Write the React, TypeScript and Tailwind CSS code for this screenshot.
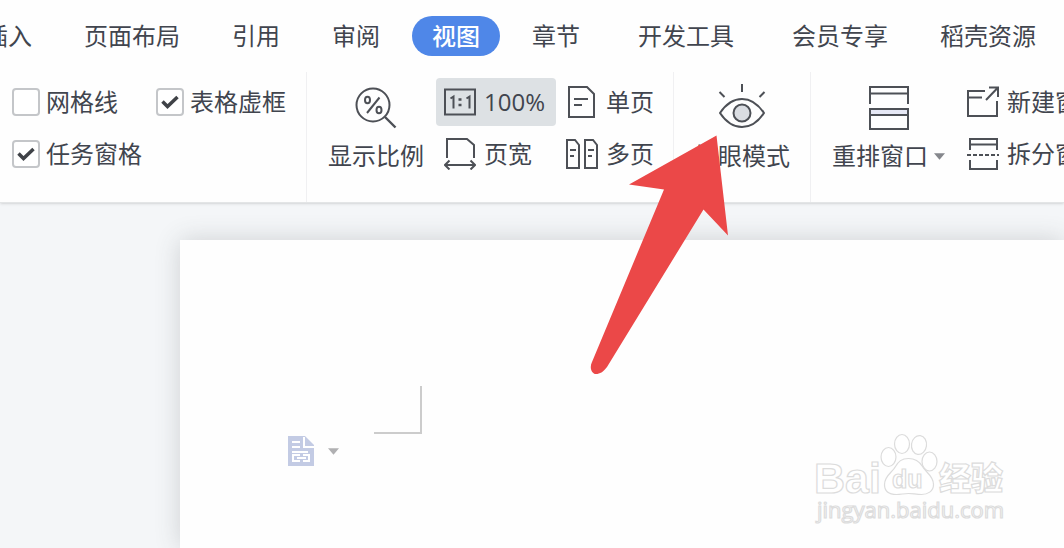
import type { ReactNode } from "react";

interface Tab {
  name: string;
  active?: boolean;
  className?: string;
}

const tabs: Tab[] = [
  { name: "插入" },
  { name: "页面布局" },
  { name: "引用" },
  { name: "审阅" },
  { name: "视图", active: true },
  { name: "章节" },
  { name: "开发工具", className: "mx-1.5" },
  { name: "会员专享" },
  { name: "稻壳资源" },
];

const ZoomIcon = () => (
  <svg width="48" height="48" viewBox="0 0 48 48" fill="none" stroke="#4d5056" strokeWidth="2">
    <circle cx="21" cy="21" r="16.500" />
    <path d="M33 33l10.500 10.500" strokeWidth="2.400" />
    <path d="M27.500 13.500L15 29" />
    <ellipse cx="15.500" cy="16" rx="2.500" ry="3.300" />
    <ellipse cx="27" cy="26" rx="2.500" ry="3.300" />
  </svg>
);

const ActualSizeIcon = () => (
  <svg width="32" height="32" viewBox="0 0 32 32" fill="none" stroke="#4d5056" strokeWidth="2">
    <rect x="1" y="3.500" width="30" height="25" />
    <path d="M6.500 12.500l3-2v12M22.500 12.500l3-2v12" />
    <path d="M14.500 13.500h3M14.500 19h3" strokeWidth="2.400" />
  </svg>
);

const PageWidthIcon = () => (
  <svg width="32" height="32" viewBox="0 0 32 32" fill="none" stroke="#4d5056" strokeWidth="2">
    <path d="M3 20V1h20l7 6v13" />
    <path d="M1 27h30M5.500 22.500L1 27l4.500 4.500M26.500 22.500L31 27l-4.500 4.500" />
  </svg>
);

const SinglePageIcon = () => (
  <svg width="32" height="32" viewBox="0 0 32 32" fill="none" stroke="#4d5056" strokeWidth="2">
    <path d="M3 1h18l7 7v23H3z" />
    <path d="M8 13h14M8 19h8" />
  </svg>
);

const MultiPageIcon = () => (
  <svg width="32" height="32" viewBox="0 0 32 32" fill="none" stroke="#4d5056" strokeWidth="2">
    <path d="M1 2h8l4 5v23H1zM19 2h8l4 5v23H19z" />
    <path d="M4 12h6M4 18h4M22 12h6M22 18h4" />
  </svg>
);

const EyeIcon = () => (
  <svg width="48" height="48" viewBox="0 0 48 48" fill="none" stroke="#4d5056" strokeWidth="2">
    <path d="M2 29C8 20 15 15 24 15s16 5 22 14c-6 9-13 14-22 14S8 38 2 29z" strokeLinejoin="round" />
    <circle cx="24" cy="29" r="8.500" fill="#dadde2" />
    <path d="M24 0v8M1.500 8l5 5M46.500 8l-5 5" />
  </svg>
);

const ArrangeIcon = () => (
  <svg width="48" height="48" viewBox="0 0 48 48" fill="none" stroke="#4d5056" strokeWidth="2">
    <path d="M5 20V3h38v17M5 9.500h38" />
    <path d="M5 25h38v6H5z" fill="#e6e8f5" />
    <path d="M5 25h38v20H5z" />
  </svg>
);

const NewWindowIcon = () => (
  <svg width="32" height="32" viewBox="0 0 32 32" fill="none" stroke="#4d5056" strokeWidth="2">
    <path d="M18 5H1v25h29V15M1 11.500h14" />
    <path d="M19 14L31 1.500M22 1.500h9V11" />
  </svg>
);

const SplitIcon = () => (
  <svg width="32" height="32" viewBox="0 0 32 32" fill="none" stroke="#4d5056" strokeWidth="2">
    <path d="M3 12V1h27v11M3 6.500h27" />
    <path d="M0 17h32" strokeDasharray="4 2" />
    <path d="M3 22v9h27v-9" />
  </svg>
);

const Caret = () => (
  <svg width="11" height="7" viewBox="0 0 12 7" fill="currentColor" className="shrink-0">
    <path d="M0 0h12L6 7z" />
  </svg>
);

const CheckOption = ({ label, checked }: { label: string; checked?: boolean }) => (
  <label className="flex h-12 items-center gap-1.5">
    <span className="grid size-7 shrink-0">
      <input
        type="checkbox"
        defaultChecked={checked}
        className="peer col-start-1 row-start-1 size-7 appearance-none rounded-sm border-2 border-[#c4c6c9] bg-white"
      />
      <svg
        viewBox="0 0 28 28"
        fill="none"
        stroke="#3f4247"
        strokeWidth="3.500"
        className="pointer-events-none invisible col-start-1 row-start-1 size-7 peer-checked:visible"
      >
        <path d="M6.500 13.500l5 5L21.500 9" />
      </svg>
    </span>
    {label}
  </label>
);

const SmallButton = ({ icon, label, pressed }: { icon: ReactNode; label: string; pressed?: boolean }) => (
  <button
    type="button"
    aria-pressed={pressed}
    className={`flex h-12 items-center gap-2 rounded-sm px-2 whitespace-nowrap ${
      pressed ? "min-w-[120px] bg-[#dde1e4]" : ""
    }`}
  >
    {icon}
    {label}
  </button>
);

const LargeButton = ({ icon, label, caret }: { icon: ReactNode; label: string; caret?: boolean }) => (
  <button type="button" className="flex flex-col items-center gap-2 pt-1.5">
    {icon}
    <span className="flex items-center gap-1.5 leading-8 whitespace-nowrap">
      {label}
      {caret && (
        <span className="text-[#85878c]">
          <Caret />
        </span>
      )}
    </span>
  </button>
);

const Group = ({ children, className = "" }: { children: ReactNode; className?: string }) => (
  <section className={`flex shrink-0 items-start border-r border-[#f0f0f2] pb-6 pt-1.5 ${className}`}>
    {children}
  </section>
);

const PointerArrow = () => (
  <svg
    width="152"
    height="248"
    viewBox="0 0 152 248"
    fill="#eb4848"
    className="pointer-events-none absolute -left-[110px] top-[54px] z-10 max-w-none"
  >
    <path d="M132.500 3.500L144 103.500 119.500 77.500 23 235C19 240 16 242 12 242C8 242 5 236 8 230L80 57.500 45 52.500z" />
  </svg>
);

const Watermark = () => (
  <svg
    width="196"
    height="96"
    viewBox="0 0 196 96"
    fill="#ffffff"
    stroke="#dcdcdc"
    strokeWidth="1.200"
    className="absolute bottom-5 right-14"
  >
    <text x="2" y="61" fontSize="43" fontWeight="700" fontFamily="'Liberation Sans', sans-serif">
      Bai
    </text>
    <ellipse cx="76.500" cy="25" rx="7.500" ry="9.500" />
    <ellipse cx="90" cy="12" rx="7.500" ry="9.500" />
    <ellipse cx="107" cy="13" rx="7.500" ry="9.500" transform="rotate(8 107 13)" />
    <ellipse cx="117.500" cy="29.500" rx="7.500" ry="9.500" />
    <path d="M96.500 26.500c7 0 11 3 14 8 3 6 11 9 11 18 0 7-6 10-12 10-5 0-9-1-13-1s-8 1-12 1c-7 0-12-3-12-10 0-9 8-12 11-18 3-5 6-8 13-8z" />
    <text x="80" y="56" fontSize="25" fontWeight="700" fontFamily="'Liberation Sans', sans-serif">
      du
    </text>
    <text x="127" y="58" fontSize="32" fontWeight="900" fontFamily="'Noto Sans CJK SC', sans-serif">
      经验
    </text>
    <text x="5" y="86" fontSize="22" fontFamily="'Open Sans', sans-serif">
      jingyan.baidu.com
    </text>
  </svg>
);

export default function App() {
  return (
    <div className="relative flex min-h-screen flex-col overflow-hidden bg-[#f4f6f8] font-['Open_Sans','Noto_Sans_CJK_SC',sans-serif] text-2xl text-[#41454e]">
      <header className="relative z-10 border-b border-[#e3e5e6] bg-[#fefefe] shadow-sm">
        <nav className="-ml-9 flex gap-3 py-4">
          {tabs.map((tab) => (
            <a
              key={tab.name}
              href="#"
              className={`flex h-10 shrink-0 items-center rounded-full px-5 whitespace-nowrap ${tab.className ?? ""} ${
                tab.active ? "bg-[#4f87e8] font-medium text-white" : ""
              }`}
            >
              {tab.name}
            </a>
          ))}
        </nav>

        <div className="flex">
          <Group className="pl-3 pr-5">
            <div className="grid grid-cols-[auto_auto] gap-x-[38px] gap-y-1">
              <CheckOption label="网格线" />
              <CheckOption label="表格虚框" checked />
              <div className="col-span-2 flex">
                <CheckOption label="任务窗格" checked />
              </div>
            </div>
          </Group>

          <Group className="gap-3 pl-[21px] pr-[11px]">
            <LargeButton icon={<ZoomIcon />} label="显示比例" />
            <div className="grid grid-cols-[auto_auto] gap-x-0.5 gap-y-1">
              <SmallButton icon={<ActualSizeIcon />} label="100%" pressed />
              <SmallButton icon={<SinglePageIcon />} label="单页" />
              <SmallButton icon={<PageWidthIcon />} label="页宽" />
              <SmallButton icon={<MultiPageIcon />} label="多页" />
            </div>
          </Group>

          <Group className="px-5">
            <div className="relative flex">
              <LargeButton icon={<EyeIcon />} label="护眼模式" />
              <PointerArrow />
            </div>
          </Group>

          <Group className="gap-3.5 pl-[21px]">
            <LargeButton icon={<ArrangeIcon />} label="重排窗口" caret />
            <div className="flex flex-col gap-1">
              <SmallButton icon={<NewWindowIcon />} label="新建窗口" />
              <SmallButton icon={<SplitIcon />} label="拆分窗口" />
            </div>
          </Group>
        </div>
      </header>

      <main className="flex flex-1 pl-[180px] pt-[37px]">
        <article className="flex-1 bg-[#fefefe] shadow-[0_0_24px_rgba(60,64,72,0.2)]">
          <div className="ml-[194px] mt-[146px] size-12 border-b-2 border-r-2 border-[#cccccc]" />
          <button type="button" aria-label="段落布局" className="ml-[108px] mt-0.5 flex items-center gap-3.5 text-[#b0b0b2]">
            <svg width="26" height="30" viewBox="0 0 26 30" fill="none">
              <path d="M0 0h17l9 9v21H0z" fill="#c3cbe4" />
              <path d="M16 1v10h10" stroke="#ffffff" strokeWidth="2" />
              <path d="M4 6h8M4 11h8M4 16h16" stroke="#ffffff" strokeWidth="2" />
              <path d="M12 19H5v6h7M15 19h6v6h-6M9 22h9" stroke="#ffffff" strokeWidth="2" />
            </svg>
            <Caret />
          </button>
        </article>
      </main>

      <Watermark />
    </div>
  );
}
